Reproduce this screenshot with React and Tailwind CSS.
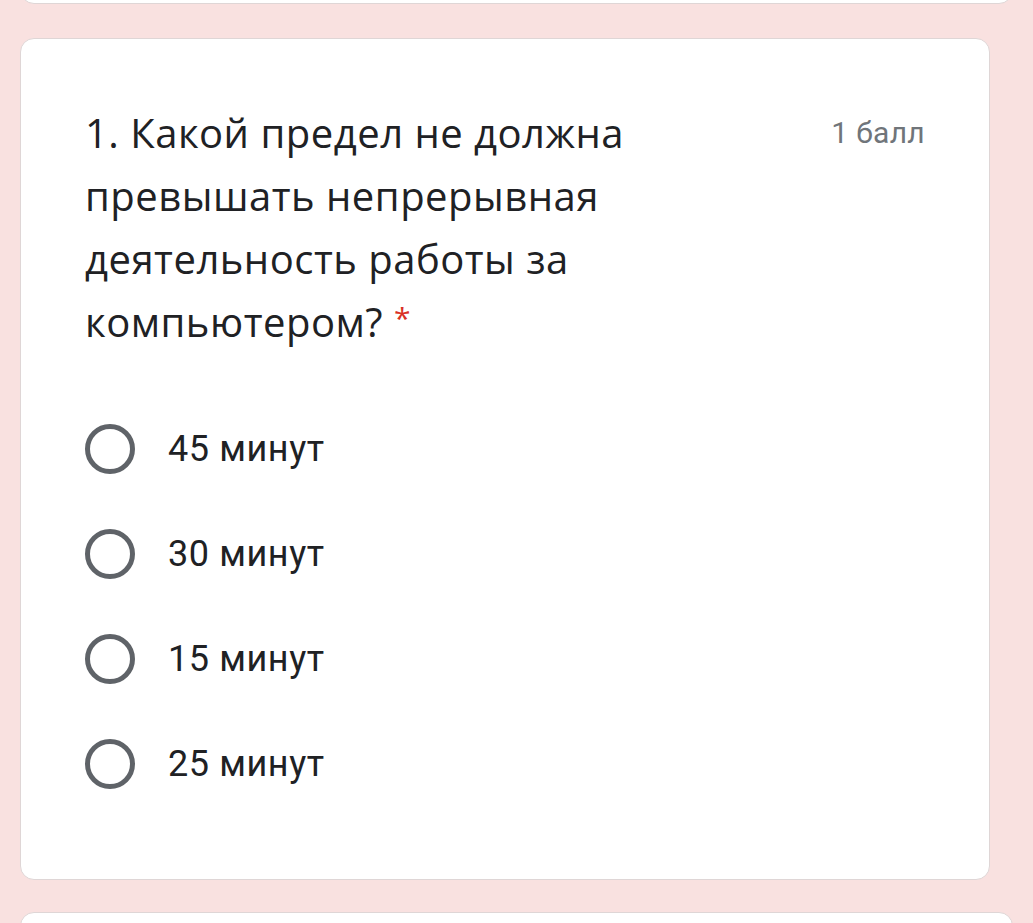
import React from 'react'

const options = ['45 минут', '30 минут', '15 минут', '25 минут'];

const Radio = () => (
    <span className="block w-[50px] h-[50px] rounded-full border-[5px] border-[#5f6368] shrink-0" />
);

const App = () => {
    return (
        <div className="h-[923px] bg-[#f9e1e0] overflow-hidden flex flex-col">
            <div className="mx-5 -mt-10 h-[44px] shrink-0 bg-white rounded-b-[14px] border border-[#dfd6d6]" />
            <div className="mx-5 mt-[34px] w-[970px] h-[842px] shrink-0 bg-white rounded-[14px] border border-[#dfd6d6] pt-[62px] px-[64px]">
                <div className="flex items-start justify-between">
                    <h2 className="text-[40px] leading-[63px] text-[#202124] tracking-[0.5px]" style={{ fontFamily: '"Open Sans", sans-serif' }}>
                        <span className="block">1. Какой предел не должна</span>
                        <span className="block">превышать непрерывная</span>
                        <span className="block">деятельность работы за</span>
                        <span className="block">компьютером? <span className="text-[#d93025] text-[30px] align-top relative top-[-4px]">*</span></span>
                    </h2>
                    <span className="text-[30px] leading-[63px] text-[#70757a] tracking-[0.3px]" style={{ fontFamily: 'Roboto, sans-serif' }}>1 балл</span>
                </div>
                <div className="mt-[43px] flex flex-col">
                    {options.map((o) => (
                        <label key={o} className="h-[105px] flex items-center gap-[33px]">
                            <Radio />
                            <span className="text-[36px] text-[#202124] tracking-[0.6px]" style={{ fontFamily: 'Roboto, sans-serif' }}>{o}</span>
                        </label>
                    ))}
                </div>
            </div>
            <div className="mx-5 mt-[32px] h-[60px] shrink-0 bg-white rounded-t-[14px] border border-[#dfd6d6]" />
        </div>
    );
}

export default App
